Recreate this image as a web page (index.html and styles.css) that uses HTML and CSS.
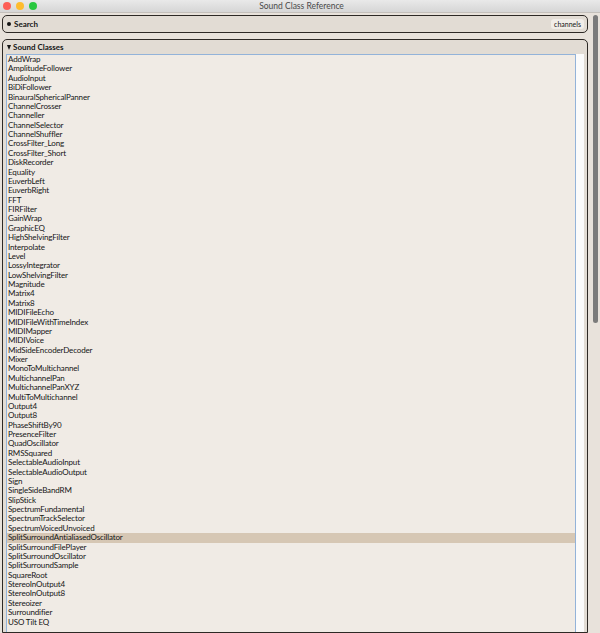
FILE: index.html
```html
<!DOCTYPE html>
<html>
<head>
<meta charset="utf-8">
<link rel="stylesheet" href="styles.css">
</head>
<body>
<div class="window">
  <div class="titlebar">
    <div class="lights">
      <span class="light red"></span>
      <span class="light yellow"></span>
      <span class="light green"></span>
    </div>
    <div class="title">Sound Class Reference</div>
  </div>
  <div class="main">
    <div class="content">
      <div class="panel search">
        <div class="label"><span class="bullet"></span>Search</div>
        <div class="field">channels</div>
      </div>
      <div class="panel classes">
        <div class="label"><span class="tri"></span>Sound Classes</div>
        <div class="listwrap">
          <ul class="list">
            <li>AddWrap</li>
            <li>AmplitudeFollower</li>
            <li>AudioInput</li>
            <li>BiDiFollower</li>
            <li>BinauralSphericalPanner</li>
            <li>ChannelCrosser</li>
            <li>Channeller</li>
            <li>ChannelSelector</li>
            <li>ChannelShuffler</li>
            <li>CrossFilter_Long</li>
            <li>CrossFilter_Short</li>
            <li>DiskRecorder</li>
            <li>Equality</li>
            <li>EuverbLeft</li>
            <li>EuverbRight</li>
            <li>FFT</li>
            <li>FIRFilter</li>
            <li>GainWrap</li>
            <li>GraphicEQ</li>
            <li>HighShelvingFilter</li>
            <li>Interpolate</li>
            <li>Level</li>
            <li>LossyIntegrator</li>
            <li>LowShelvingFilter</li>
            <li>Magnitude</li>
            <li>Matrix4</li>
            <li>Matrix8</li>
            <li>MIDIFileEcho</li>
            <li>MIDIFileWithTimeIndex</li>
            <li>MIDIMapper</li>
            <li>MIDIVoice</li>
            <li>MidSideEncoderDecoder</li>
            <li>Mixer</li>
            <li>MonoToMultichannel</li>
            <li>MultichannelPan</li>
            <li>MultichannelPanXYZ</li>
            <li>MultiToMultichannel</li>
            <li>Output4</li>
            <li>Output8</li>
            <li>PhaseShiftBy90</li>
            <li>PresenceFilter</li>
            <li>QuadOscillator</li>
            <li>RMSSquared</li>
            <li>SelectableAudioInput</li>
            <li>SelectableAudioOutput</li>
            <li>Sign</li>
            <li>SingleSideBandRM</li>
            <li>SlipStick</li>
            <li>SpectrumFundamental</li>
            <li>SpectrumTrackSelector</li>
            <li>SpectrumVoicedUnvoiced</li>
            <li class="selected">SplitSurroundAntialiasedOscillator</li>
            <li>SplitSurroundFilePlayer</li>
            <li>SplitSurroundOscillator</li>
            <li>SplitSurroundSample</li>
            <li>SquareRoot</li>
            <li>StereoInOutput4</li>
            <li>StereoInOutput8</li>
            <li>Stereoizer</li>
            <li>Surroundifier</li>
            <li>USO Tilt EQ</li>
          </ul>
          <div class="track"></div>
        </div>
      </div>
    </div>
    <div class="vscroll"><div class="thumb"></div></div>
  </div>
</div>
</body>
</html>
```

FILE: styles.css
```css
html, body {
  margin: 0;
  padding: 0;
}
body {
  width: 600px;
  height: 633px;
  overflow: hidden;
  background: #e8e2db;
  font-family: "Lato", "Open Sans", sans-serif;
  color: #151515;
}
.window {
  display: flex;
  flex-direction: column;
  height: 633px;
}
.titlebar {
  height: 13px;
  flex: none;
  display: flex;
  align-items: center;
  background: linear-gradient(#e9e9e9, #d6d6d6);
  border-bottom: 1px solid #c4c0bb;
  box-sizing: border-box;
}
.lights {
  display: flex;
  gap: 5px;
  padding-left: 3px;
}
.light {
  width: 8px;
  height: 8px;
  border-radius: 50%;
  display: block;
}
.red { background: #fd5f57; }
.yellow { background: #febc2e; }
.green { background: #29c840; }
.title {
  flex: 1;
  text-align: center;
  font-size: 8.5px;
  color: #4a4a4a;
  margin-right: 34px;
}
.main {
  flex: 1;
  display: flex;
  min-height: 0;
}
.content {
  width: 591px;
  padding-left: 2px;
  padding-right: 3px;
  box-sizing: border-box;
  display: flex;
  flex-direction: column;
}
.vscroll {
  flex: 1;
  padding: 2px 2px 0 2px;
}
.thumb {
  width: 5px;
  height: 308px;
  border-radius: 3px;
  background: #7b7b7b;
}
.panel {
  background: #e2dcd4;
  border: 1.5px solid #2d2925;
  border-radius: 5px;
  box-sizing: border-box;
}
.label {
  font-weight: bold;
  font-size: 8px;
  display: flex;
  align-items: center;
}
.bullet {
  width: 4px;
  height: 4px;
  border-radius: 50%;
  background: #151515;
  margin-right: 3px;
}
.tri {
  width: 0;
  height: 0;
  border-left: 2.5px solid transparent;
  border-right: 2.5px solid transparent;
  border-top: 5px solid #151515;
  margin-right: 2px;
}
.search {
  margin-top: 2px;
  height: 18px;
  display: flex;
  align-items: center;
  justify-content: space-between;
  padding: 0 3px 0 4px;
}
.field {
  font-size: 7px;
  background: #f1ede8;
  border-radius: 3px;
  padding: 1px 3px;
  line-height: 8px;
}
.classes {
  margin-top: 6px;
  flex: 1;
  display: flex;
  flex-direction: column;
  border-bottom-left-radius: 0;
  border-bottom-right-radius: 0;
  padding: 0 3px 0 3px;
}
.classes .label {
  height: 14px;
  padding-left: 1px;
}
.listwrap {
  flex: 1;
  display: flex;
  min-height: 0;
}
.list {
  list-style: none;
  margin: 0;
  padding: 0;
  flex: 1;
  background: #f0ebe5;
  border: 1px solid #93b3d9;
  border-bottom: none;
  font-size: 8px;
  line-height: 9.38px;
  letter-spacing: -0.15px;
}
.list li {
  padding-left: 1px;
  white-space: nowrap;
}
.list li.selected {
  background: #d6c7b4;
}
.track {
  width: 8px;
  background: #fbfbfb;
}
```
